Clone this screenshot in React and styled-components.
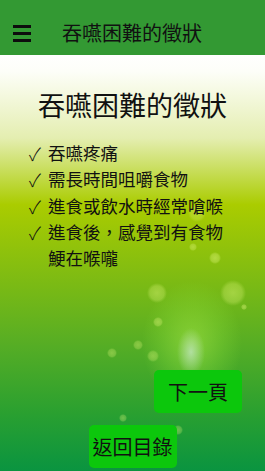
import React from "react";
import styled, {createGlobalStyle} from "styled-components";

const GlobalStyle = createGlobalStyle`
  html, body {
    margin: 0;
    padding: 0;
  }
  body {
    font-family: "Noto Sans CJK TC", "Noto Sans", sans-serif;
    color: #111;
  }
`;

/*
    Bokeh dots over the gradient: [x, y, radius, alpha]
*/
const dots = [
  [157, 238, 10, 0.45],
  [233, 238, 13, 0.45],
  [244, 252, 3, 0.5],
  [158, 267, 5, 0.45],
  [138, 290, 5, 0.4],
  [112, 298, 5, 0.4],
  [153, 301, 6, 0.4],
  [123, 363, 4, 0.4],
  [178, 375, 5, 0.4],
  [193, 192, 4, 0.45],
  [215, 203, 6, 0.5],
  [197, 158, 9, 0.35]
];

const bokeh = dots
  .map(
    ([x, y, r, a]) =>
      `radial-gradient(circle ${r}px at ${x}px ${y}px, rgba(220, 245, 120, ${a}) 0%, rgba(220, 245, 120, ${a * 0.7}) 70%, rgba(220, 245, 120, 0) 100%)`
  )
  .join(",\n");

const Page = styled.div`
  height: 100vh;
  display: flex;
  flex-direction: column;
  overflow: hidden;
`;

const Header = styled.header`
  height: 55px;
  box-sizing: border-box;
  padding: 11px 0 0 13px;
  background: #339933;
  display: flex;
  align-items: center;
`;

const Hamburger = styled.div`
  width: 18px;
  display: flex;
  flex-direction: column;
  gap: 4px;
  margin-right: 31px;
`;

const Bar = styled.span`
  display: block;
  height: 3px;
  background: #0d0d0d;
`;

const HeaderTitle = styled.h1`
  margin: 0;
  font-size: 20px;
  font-weight: 400;
  line-height: 1;
`;

const Content = styled.main`
  flex: 1;
  display: flex;
  flex-direction: column;
  background:
    ${bokeh},
    radial-gradient(ellipse 14px 24px at 191px 297px, rgba(195, 230, 195, 0.75) 0%, rgba(195, 230, 195, 0) 100%),
    radial-gradient(ellipse 50px 62px at 192px 288px, rgba(170, 235, 70, 0.55) 0%, rgba(150, 230, 60, 0.25) 60%, rgba(150, 230, 60, 0) 100%),
    linear-gradient(
      to bottom,
      #ffffff 0%,
      #fdfef8 4%,
      #e4eeb0 20%,
      #aacc00 36%,
      #80bc12 53%,
      #55ad25 70%,
      #2aa030 86%,
      #0a9440 100%
    );
`;

const Title = styled.h2`
  margin: 34px 0 0;
  text-align: center;
  font-size: 27px;
  font-weight: 400;
  line-height: 32px;
`;

const List = styled.ul`
  list-style: none;
  margin: 19px 0 0;
  padding: 0 0 0 29px;
`;

const Item = styled.li`
  display: flex;
  font-size: 17.5px;
  line-height: 26.3px;
`;

const Check = styled.span`
  flex: 0 0 19px;
  font-family: "Noto Sans CJK TC", "DejaVu Sans", sans-serif;
  font-size: 18px;
  font-weight: 300;
`;

const ItemText = styled.span`
  max-width: 176px;
`;

const Buttons = styled.div`
  margin-top: auto;
  display: flex;
  flex-direction: column;
  gap: 12px;
  padding-bottom: 3px;
`;

const Button = styled.button`
  align-self: ${props => (props.right ? "flex-end" : "center")};
  margin-right: ${props => (props.right ? "23px" : "0")};
  width: 88px;
  height: 43px;
  border: none;
  border-radius: 5px;
  background: #0cc70c;
  color: #111;
  font-family: "Noto Sans CJK TC", sans-serif;
  font-size: 20px;
  padding: 0;
`;

const symptoms = [
  "吞嚥疼痛",
  "需長時間咀嚼食物",
  "進食或飲水時經常嗆喉",
  "進食後，感覺到有食物鯁在喉嚨"
];

const App = () => (
  <Page>
    <GlobalStyle />
    <Header>
      <Hamburger>
        <Bar />
        <Bar />
        <Bar />
      </Hamburger>
      <HeaderTitle>吞嚥困難的徵狀</HeaderTitle>
    </Header>
    <Content>
      <Title>吞嚥困難的徵狀</Title>
      <List>
        {symptoms.map(s => (
          <Item key={s}>
            <Check>✓</Check>
            <ItemText>{s}</ItemText>
          </Item>
        ))}
      </List>
      <Buttons>
        <Button right>下一頁</Button>
        <Button>返回目錄</Button>
      </Buttons>
    </Content>
  </Page>
);

export default App;
